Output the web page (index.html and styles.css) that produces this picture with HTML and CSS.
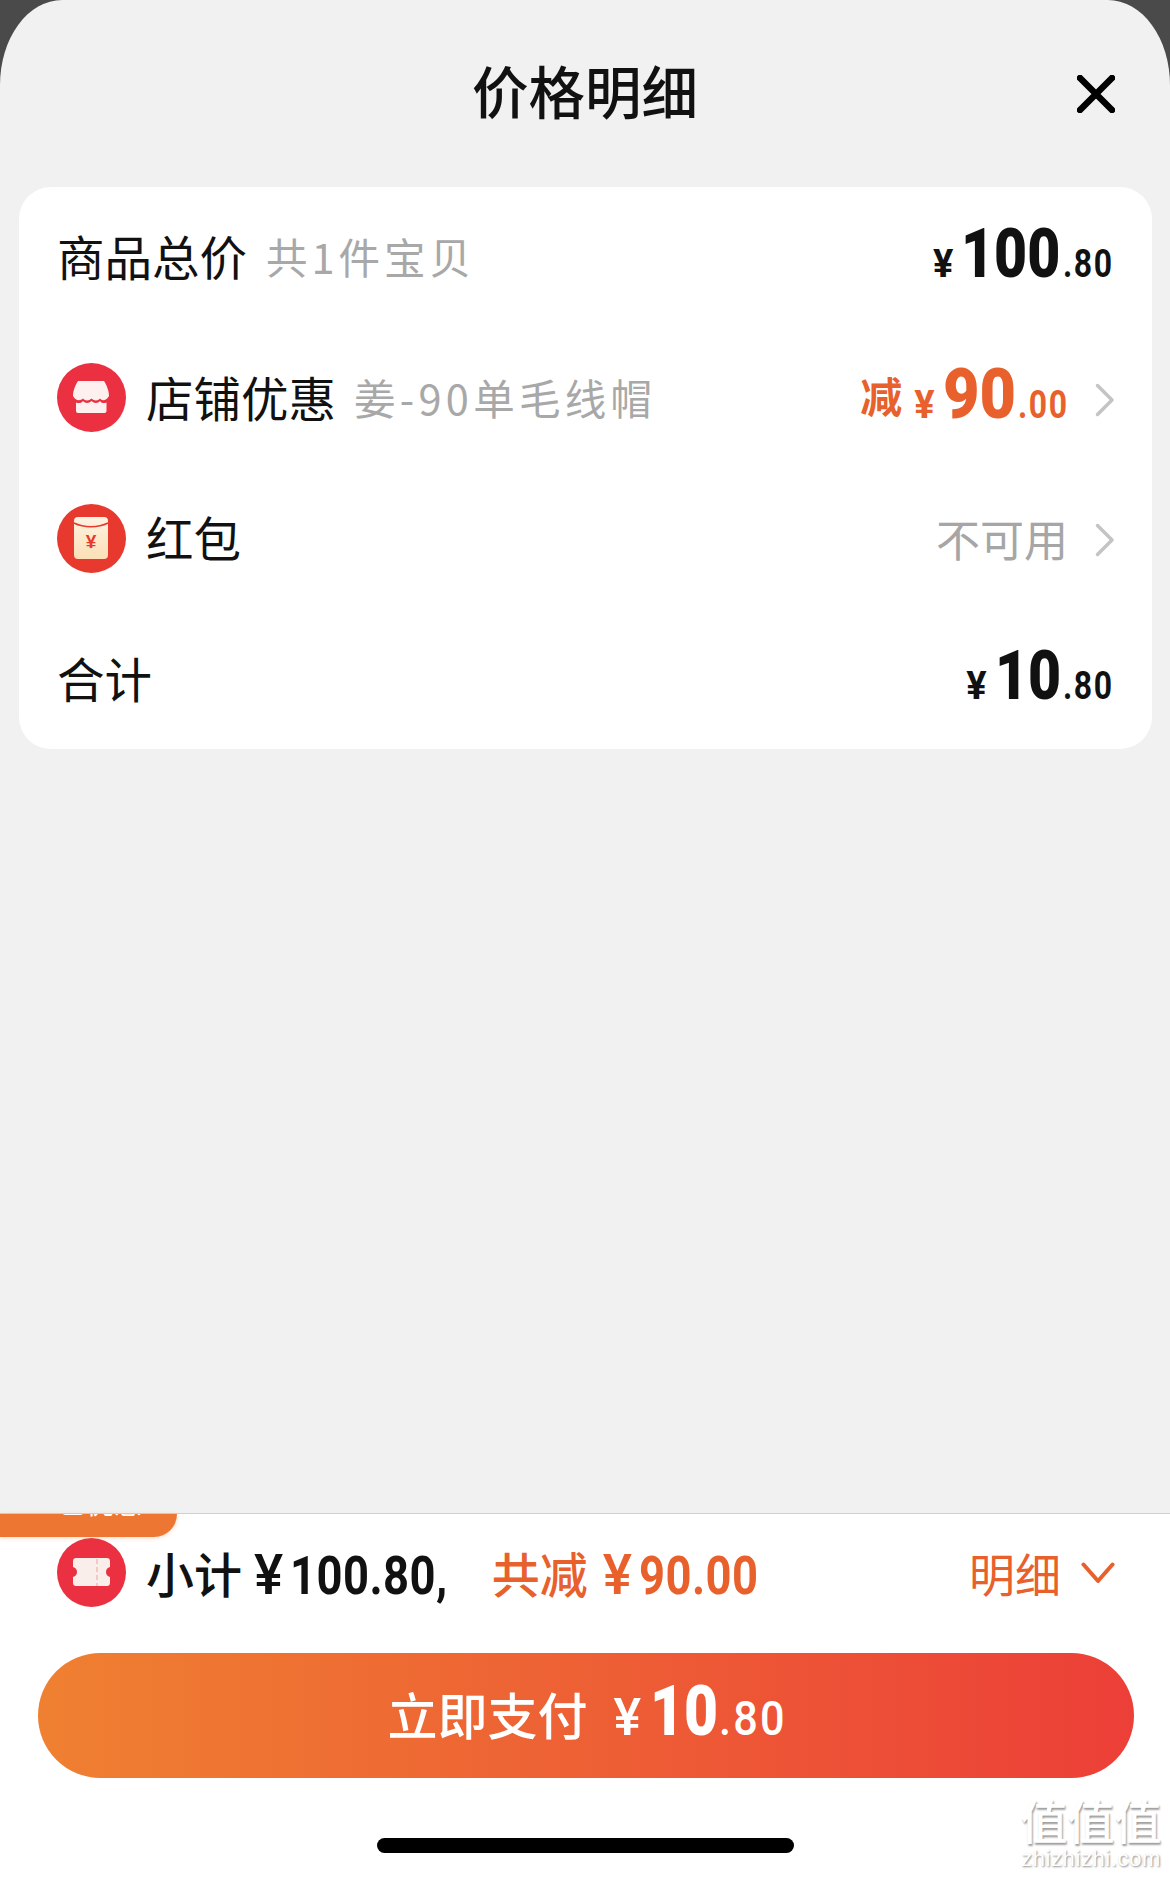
FILE: index.html
```html
<!DOCTYPE html>
<html lang="zh-CN">
<head>
<meta charset="utf-8">
<title>价格明细</title>
<link rel="stylesheet" href="styles.css">
</head>
<body>
<main class="sheet">
  <header class="head">
    <h1 class="title">价格明细</h1>
    <svg class="close" viewBox="0 0 38 38" aria-label="关闭"><path d="M3 3 35 35M35 3 3 35"/></svg>
  </header>

  <section class="card">
    <div class="row">
      <span class="label">商品总价</span><span class="sub">共1件宝贝</span>
      <span class="money price"><i class="yen">¥</i><b class="int n3">100</b><i class="dec">.80</i></span>
    </div>
    <div class="row">
      <svg class="icon" viewBox="0 0 69 69">
        <circle cx="34.5" cy="34.5" r="34.5" fill="#ea3041"/>
        <path fill="#fdf0ee" d="M21 18H47C49 21 52 27 52 33C49 38 45 38 43 35.500C41 38 37 38 34.500 35.500C32 38 28 38 26 35.500C23 38 19 38 16 33C16 27 19 21 21 18Z"/>
        <path fill="#fdf0ee" d="M19 39.500C21 40.500 24 40.500 26 38C28 40.500 32 40.500 34.500 38C37 40.500 41 40.500 43 38C45 40.500 47 40.500 49.500 39.500V48Q49.500 50 47.500 50H21Q19 50 19 48Z"/>
      </svg>
      <span class="label">店铺优惠</span><span class="sub sub-long">姜-90单毛线帽</span>
      <span class="money orange off"><em class="cut">减</em><i class="yen">¥</i><b class="int big">90</b><i class="dec">.00</i></span>
      <svg class="chev" viewBox="0 0 20 34"><path d="M2.500 2.500 17 17 2.500 31.500"/></svg>
    </div>
    <div class="row">
      <svg class="icon" viewBox="0 0 69 69">
        <circle cx="34.500" cy="34.500" r="34.500" fill="#e8392e"/>
        <rect x="17" y="13" width="34" height="42" rx="4" fill="url(#env)"/>
        <path d="M17 19C27 24 41 24 51 19" fill="none" stroke="#e8392e" stroke-width="1.500"/>
        <defs><linearGradient id="env" x1="0" y1="0" x2="0" y2="1"><stop offset="0" stop-color="#fdf3e2"/><stop offset="1" stop-color="#fbdfb6"/></linearGradient></defs>
        <text class="env-yen" x="34" y="44" text-anchor="middle">¥</text>
      </svg>
      <span class="label">红包</span>
      <span class="muted">不可用</span>
      <svg class="chev" viewBox="0 0 20 34"><path d="M2.500 2.500 17 17 2.500 31.500"/></svg>
    </div>
    <div class="row">
      <span class="label">合计</span>
      <span class="money price"><i class="yen">¥</i><b class="int n2">10</b><i class="dec">.80</i></span>
    </div>
  </section>

  <footer class="foot">
    <div class="tag"><span class="tag-text">已优惠</span></div>
    <div class="summary">
      <svg class="icon" viewBox="0 0 69 69">
        <circle cx="34.500" cy="34.500" r="34.500" fill="#ea3041"/>
        <path fill="#f9eeea" d="M19 20H50C51.700 20 53 21.300 53 23V29C50.500 29.500 49 31.500 49 34C49 36.500 50.500 38.500 53 39V45C53 46.700 51.700 48 50 48H19C17.300 48 16 46.700 16 45V39C18.500 38.500 20 36.500 20 34C20 31.500 18.500 29.500 16 29V23C16 21.300 17.300 20 19 20Z"/>
        <path d="M40 21V48" stroke="#f3c8c2" stroke-width="2" stroke-dasharray="5 3"/>
      </svg>
      <span class="sum-text">小计</span><span class="sum-num">¥<span class="sum-val s-long">100.80,</span></span>
      <span class="sum-off">共减</span><span class="sum-num orange">¥<span class="sum-val s-short">90.00</span></span>
      <span class="detail">明细</span>
      <svg class="chev-down" viewBox="0 0 34 23"><path d="M2.500 2.500 17 19 31.500 2.500"/></svg>
    </div>
    <button class="pay" type="button">
      <span class="pay-label">立即支付</span><i class="pay-yen">¥</i><b class="pay-int">10</b><i class="pay-dec">.80</i>
    </button>
    <div class="homebar"></div>
    <div class="mark"><span class="mark-cn">值值值</span><span class="mark-en">zhizhizhi.com</span></div>
  </footer>
</main>
</body>
</html>
```
FILE: styles.css
```css
* { box-sizing: border-box; }
html, body { margin: 0; padding: 0; }
body {
  width: 1170px;
  height: 1877px;
  overflow: hidden;
  background: #4a4a4a;
  font-family: "Noto Sans CJK SC", "Noto Sans", sans-serif;
  color: #111;
}
i, em { font-style: normal; }

.sheet {
  position: relative;
  height: 1877px;
  display: flex;
  flex-direction: column;
  background: #f1f1f1;
  border-radius: 62px 62px 0 0 / 85px 85px 0 0;
  overflow: hidden;
}

.head {
  height: 187px;
  flex: none;
  display: flex;
  align-items: flex-start;
  justify-content: center;
  position: relative;
}
.title {
  margin: 49px 0 0;
  font-size: 56.500px;
  line-height: 80px;
  font-weight: 500;
}
.close {
  position: absolute;
  left: 1077px;
  top: 75px;
  width: 38px;
  height: 38px;
}
.close path { stroke: #000; stroke-width: 6.500; stroke-linecap: round; fill: none; }

.card {
  flex: none;
  height: 562px;
  margin: 0 18px 0 19px;
  padding: 0 37px 0 38px;
  background: #fff;
  border-radius: 32px;
  display: grid;
  grid-template-rows: repeat(4, 1fr);
}
.row {
  display: flex;
  align-items: center;
  min-width: 0;
}
.icon { width: 69px; height: 69px; flex: none; margin-right: 20px; }
.env-yen { font: 700 19px "Liberation Sans", sans-serif; fill: #e8392e; }
.label { font-size: 47.500px; line-height: 60px; margin-top: -2px; color: #111; }
.sub { margin-left: 19px; margin-top: -2px; font-size: 41.500px; letter-spacing: 4px; line-height: 60px; color: #a8a8a8; font-weight: 400; }
.sub-long { margin-left: 18px; letter-spacing: 4.300px; }
.muted { margin-left: auto; margin-right: 27px; font-size: 44px; line-height: 60px; color: #a6a6a6; font-weight: 400; }

.money {
  margin-left: auto;
  padding-top: 4px;
  display: flex;
  align-items: baseline;
  font-family: "Roboto", sans-serif;
  font-weight: 700;
  line-height: 70px;
}
.price { padding-right: 1px; }
.yen { font-size: 38px; font-weight: 700; margin-right: 8px; }
.int, .dec, .sum-val, .pay-int, .pay-dec { display: inline-block; transform-origin: left center; }
.int { font-size: 68px; transform: scaleX(.84); }
.n3 { margin-right: -.27em; }
.n2 { margin-right: -.18em; }
.int.big { font-size: 70px; transform: scaleX(.9); margin-right: -.11em; }
.dec { font-size: 38px; letter-spacing: .05em; margin-left: 2px; transform: scaleX(.84); margin-right: -.25em; }
.orange { color: #e8602b; }
.off { margin-right: 26px; }
.cut { font-family: "Noto Sans CJK SC", sans-serif; font-size: 42px; font-weight: 700; margin-right: 12px; transform: translateY(-5px); }
.chev { width: 20px; height: 34px; flex: none; margin-top: 4px; }
.chev path { fill: none; stroke: #c4c4c4; stroke-width: 3.500; stroke-linecap: round; stroke-linejoin: round; }

.foot {
  position: relative;
  margin-top: auto;
  flex: none;
  background: #fff;
  border-top: 1px solid #cfcfcf;
  padding: 0 36px 24px 38px;
}
.tag {
  position: absolute;
  left: 0;
  top: 0;
  width: 177px;
  height: 23px;
  overflow: hidden;
  background: #ed7632;
  border-radius: 0 0 28px 0;
  box-shadow: 0 1px 4px rgba(237, 118, 50, .3);
}
.tag-text {
  position: absolute;
  left: 58px;
  bottom: 21px;
  font-size: 28px;
  line-height: 28px;
  color: #fff;
  white-space: nowrap;
}
.summary {
  height: 118px;
  padding: 0 0 2px 19px;
  display: flex;
  align-items: center;
  color: #111;
}
.sum-text { font-size: 48px; line-height: 60px; font-weight: 500; margin-right: 12px; }
.sum-off { font-size: 48px; line-height: 60px; font-weight: 500; color: #e8602b; margin-left: 42px; margin-right: 15px; }
.sum-num {
  font-family: "Roboto", sans-serif;
  font-size: 55px;
  font-weight: 500;
  line-height: 60px;
  padding-top: 6px;
  display: flex;
  align-items: baseline;
}
.sum-val { font-size: 54px; font-weight: 700; margin-left: 7px; letter-spacing: .01em; transform: scaleX(.84); }
.s-long { margin-right: -.52em; }
.s-short { margin-right: -.48em; }
.detail { margin-left: auto; margin-right: 20px; font-size: 46px; line-height: 60px; color: #e8602b; font-weight: 400; }
.chev-down { width: 34px; height: 23px; flex: none; margin: 3px 19px 0 0; }
.chev-down path { fill: none; stroke: #e8602b; stroke-width: 4; stroke-linecap: round; stroke-linejoin: round; }

.pay {
  display: flex;
  align-items: baseline;
  justify-content: center;
  width: 1096px;
  height: 125px;
  margin: 21px 0 0;
  padding: 18px 0 0;
  border: 0;
  border-radius: 63px;
  background: linear-gradient(90deg, #ef8031, #ec3f38);
  color: #fff;
  font-family: "Roboto", sans-serif;
  font-weight: 700;
  line-height: 80px;
}
.pay-label { font-family: "Noto Sans CJK SC", sans-serif; font-size: 50px; font-weight: 500; margin-right: 26px; letter-spacing: 0; }
.pay-yen { font-size: 52px; font-weight: 500; margin-right: 9px; }
.pay-int { font-size: 70px; transform: scaleX(.84); margin-right: -.18em; }
.pay-dec { font-size: 48px; font-weight: 500; letter-spacing: .05em; margin-left: 0; transform: scaleX(.9); margin-right: -.19em; }

.homebar {
  width: 417px;
  height: 15px;
  margin: 60px 0 0 339px;
  background: #000;
  border-radius: 8px;
}

.mark {
  position: absolute;
  right: 8px;
  bottom: 8px;
  width: 142px;
  display: flex;
  flex-direction: column;
  align-items: center;
  color: #fff;
  pointer-events: none;
}
.mark-cn {
  font-size: 47px;
  line-height: 50px;
  font-weight: 500;
  white-space: nowrap;
  text-shadow: 1px 2px 2px rgba(0,0,0,.4);
}
.mark-en {
  font-family: "Liberation Sans", sans-serif;
  font-size: 22px;
  line-height: 20px;
  letter-spacing: .6px;
  margin-top: 5px;
  white-space: nowrap;
  text-shadow: 1px 1px 2px rgba(0,0,0,.45);
}
```
